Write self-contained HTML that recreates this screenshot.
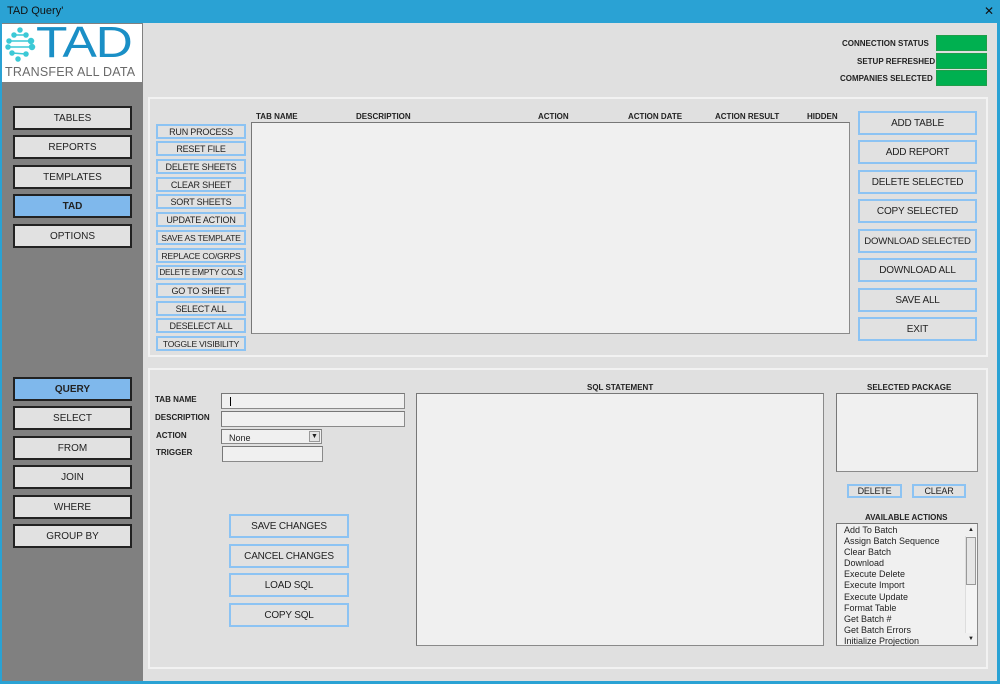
<!DOCTYPE html>
<html><head><style>
*{margin:0;padding:0;box-sizing:border-box}
body{width:1000px;height:684px;position:relative;overflow:hidden;background:#e0e0e0;font-family:"Liberation Sans",sans-serif;color:#222}
.a{position:absolute}
.t{position:absolute;font-size:9px;white-space:nowrap}
.b{font-weight:bold;font-size:8px}
.sb{position:absolute;left:13px;width:119px;height:24px;background:#e1e1e1;border:2px solid #222;font-size:10px;display:flex;align-items:center;justify-content:center}
.sb.on{background:#7fb8ec}
.sm{position:absolute;left:156px;width:90px;height:15px;background:#e1e1e1;border:2px solid #8cc3f3;font-size:9px;display:flex;align-items:center;justify-content:center;white-space:nowrap;letter-spacing:-0.2px}
.rb{position:absolute;left:858px;width:119px;height:24px;background:#e1e1e1;border:2px solid #8cc3f3;font-size:10px;display:flex;align-items:center;justify-content:center;white-space:nowrap;letter-spacing:-0.2px}
.box{position:absolute;background:#f0f0f0;border:1px solid #8a8a8a;border-top-color:#777;border-left-color:#777}
.g{position:absolute;left:936px;width:51px;height:16px;background:#00b050;border:1px solid #1f9e4a}
.li{font-size:9px;line-height:11.1px;padding-left:7px}
</style></head><body>
<div class="a" style="left:0;top:0;width:1000px;height:23px;background:#2aa2d4"></div>
<div class="t" style="left:7px;top:5px;font-size:11px;color:#111">TAD Query'</div>
<div class="t" style="left:984px;top:4px;font-size:12px;color:#111">✕</div>
<div class="a" style="left:997px;top:23px;width:3px;height:661px;background:#2aa2d4"></div>
<div class="a" style="left:0;top:681px;width:1000px;height:3px;background:#2aa2d4"></div>
<div class="a" style="left:0;top:23px;width:143px;height:658px;background:#808080"></div>
<div class="a" style="left:0;top:23px;width:2px;height:658px;background:#2aa2d4"></div>
<div class="a" style="left:2px;top:24px;width:140px;height:58px;background:#fff"></div>
<svg class="a" style="left:4px;top:27px" width="32" height="36" viewBox="0 0 32 36">
<g fill="#3cc9d6" stroke="#3cc9d6" stroke-width="1.5">
<circle cx="16" cy="3" r="2"/><circle cx="10" cy="8" r="2"/><circle cx="22" cy="8" r="2"/><circle cx="5" cy="14" r="2"/><circle cx="27" cy="14" r="2.5"/><circle cx="4" cy="20" r="2"/><circle cx="28" cy="20" r="2.5"/><circle cx="8" cy="26" r="2"/><circle cx="22" cy="27" r="2"/><circle cx="14" cy="32" r="2"/>
<line x1="5" y1="14" x2="27" y2="14"/><line x1="4" y1="20" x2="28" y2="20"/><line x1="10" y1="8" x2="22" y2="8"/><line x1="8" y1="26" x2="22" y2="27"/></g></svg>
<div class="t" style="left:36px;top:21px;font-size:44px;line-height:44px;color:#1a8fc6;letter-spacing:-1px;transform:scaleX(1.17);transform-origin:left top">TAD</div>
<div class="t" style="left:5px;top:65px;font-size:12.5px;color:#6a6a6a;letter-spacing:0.2px">TRANSFER ALL DATA</div>

<div class="sb" style="top:106px">TABLES</div>
<div class="sb" style="top:135px">REPORTS</div>
<div class="sb" style="top:165px">TEMPLATES</div>
<div class="sb on" style="top:194px;font-weight:bold">TAD</div>
<div class="sb" style="top:224px">OPTIONS</div>
<div class="sb on" style="top:377px;font-weight:bold">QUERY</div>
<div class="sb" style="top:406px">SELECT</div>
<div class="sb" style="top:436px">FROM</div>
<div class="sb" style="top:465px">JOIN</div>
<div class="sb" style="top:495px">WHERE</div>
<div class="sb" style="top:524px">GROUP BY</div>

<div class="t b" style="left:842px;top:39px">CONNECTION STATUS</div>
<div class="t b" style="left:857px;top:57px">SETUP REFRESHED</div>
<div class="t b" style="left:840px;top:74px">COMPANIES SELECTED</div>
<div class="g" style="top:35px"></div><div class="g" style="top:53px"></div><div class="g" style="top:70px"></div>

<div class="a" style="left:148px;top:97px;width:840px;height:260px;border:2px solid #f2f2f2"></div>
<div class="a" style="left:148px;top:368px;width:840px;height:301px;border:2px solid #f2f2f2"></div>

<div class="t b" style="left:256px;top:112px">TAB NAME</div>
<div class="t b" style="left:356px;top:112px">DESCRIPTION</div>
<div class="t b" style="left:538px;top:112px">ACTION</div>
<div class="t b" style="left:628px;top:112px">ACTION DATE</div>
<div class="t b" style="left:715px;top:112px">ACTION RESULT</div>
<div class="t b" style="left:807px;top:112px">HIDDEN</div>
<div class="box" style="left:251px;top:122px;width:599px;height:212px"></div>

<div class="sm" style="top:124px">RUN PROCESS</div>
<div class="sm" style="top:141px">RESET FILE</div>
<div class="sm" style="top:159px">DELETE SHEETS</div>
<div class="sm" style="top:177px">CLEAR SHEET</div>
<div class="sm" style="top:194px">SORT SHEETS</div>
<div class="sm" style="top:212px">UPDATE ACTION</div>
<div class="sm" style="top:230px;font-size:8.6px">SAVE AS TEMPLATE</div>
<div class="sm" style="top:248px;font-size:8.6px">REPLACE CO/GRPS</div>
<div class="sm" style="top:265px;font-size:8.2px">DELETE EMPTY COLS</div>
<div class="sm" style="top:283px">GO TO SHEET</div>
<div class="sm" style="top:301px">SELECT ALL</div>
<div class="sm" style="top:318px">DESELECT ALL</div>
<div class="sm" style="top:336px;font-size:8.5px">TOGGLE VISIBILITY</div>

<div class="rb" style="top:111px">ADD TABLE</div>
<div class="rb" style="top:140px">ADD REPORT</div>
<div class="rb" style="top:170px">DELETE SELECTED</div>
<div class="rb" style="top:199px">COPY SELECTED</div>
<div class="rb" style="top:229px;font-size:9.6px">DOWNLOAD SELECTED</div>
<div class="rb" style="top:258px">DOWNLOAD ALL</div>
<div class="rb" style="top:288px">SAVE ALL</div>
<div class="rb" style="top:317px">EXIT</div>

<div class="t b" style="left:155px;top:395px">TAB NAME</div>
<div class="t b" style="left:155px;top:413px">DESCRIPTION</div>
<div class="t b" style="left:156px;top:431px">ACTION</div>
<div class="t b" style="left:156px;top:448px">TRIGGER</div>
<div class="box" style="left:221px;top:393px;width:184px;height:16px"><div class="a" style="left:8px;top:3px;width:1px;height:9px;background:#000"></div></div>
<div class="box" style="left:221px;top:411px;width:184px;height:16px"></div>
<div class="box" style="left:221px;top:429px;width:101px;height:15px;font-size:9px;padding:3px 0 0 7px">None<div class="a" style="right:1px;top:1px;width:11px;height:11px;background:#e6e6e6;border:1px solid #999;font-size:7px;text-align:center;line-height:10px">▼</div></div>
<div class="box" style="left:222px;top:446px;width:101px;height:16px"></div>

<div class="rb" style="left:229px;top:514px;width:120px">SAVE CHANGES</div>
<div class="rb" style="left:229px;top:544px;width:120px">CANCEL CHANGES</div>
<div class="rb" style="left:229px;top:573px;width:120px">LOAD SQL</div>
<div class="rb" style="left:229px;top:603px;width:120px">COPY SQL</div>

<div class="t b" style="left:587px;top:383px">SQL STATEMENT</div>
<div class="box" style="left:416px;top:393px;width:408px;height:253px"></div>

<div class="t b" style="left:867px;top:383px">SELECTED PACKAGE</div>
<div class="box" style="left:836px;top:393px;width:142px;height:79px"></div>
<div class="rb" style="left:847px;top:484px;width:55px;height:14px;font-size:9px">DELETE</div>
<div class="rb" style="left:912px;top:484px;width:54px;height:14px;font-size:9px">CLEAR</div>
<div class="t b" style="left:865px;top:513px">AVAILABLE ACTIONS</div>
<div class="box" style="left:836px;top:523px;width:142px;height:123px;padding-top:1px">
<div class="li">Add To Batch</div><div class="li">Assign Batch Sequence</div><div class="li">Clear Batch</div><div class="li">Download</div><div class="li">Execute Delete</div><div class="li">Execute Import</div><div class="li">Execute Update</div><div class="li">Format Table</div><div class="li">Get Batch #</div><div class="li">Get Batch Errors</div><div class="li">Initialize Projection</div>
<div class="a" style="right:0;top:0;width:12px;height:121px;background:#f4f4f4;border-left:1px solid #ddd"></div>
<div class="a" style="right:0;top:0;width:12px;height:12px;background:#f0f0f0;font-size:6px;text-align:center;line-height:12px">▲</div>
<div class="a" style="right:1px;top:13px;width:10px;height:48px;background:#e6e6e6;border:1px solid #999"></div>
<div class="a" style="right:0;top:109px;width:12px;height:12px;background:#f0f0f0;font-size:6px;text-align:center;line-height:12px">▼</div>
</div>
</body></html>
